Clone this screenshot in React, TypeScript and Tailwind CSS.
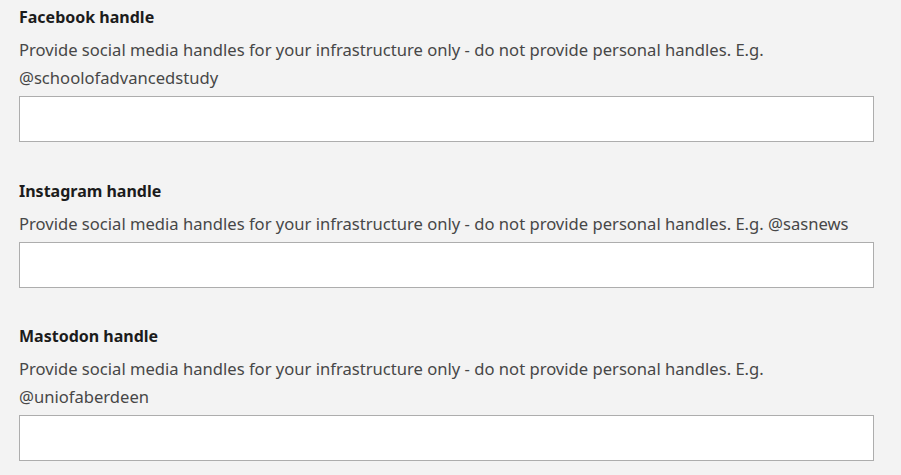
import React from 'react'

const fields = [
  { label: 'Facebook handle', example: '@schoolofadvancedstudy' },
  { label: 'Instagram handle', example: '@sasnews' },
  { label: 'Mastodon handle', example: '@uniofaberdeen' },
]

export default function App() {
  return (
    <div
      className="min-h-[475px] bg-[#f3f3f3] px-[19px] pt-[5px]"
      style={{ fontFamily: '"Noto Sans", sans-serif' }}
    >
      <div className="w-[855px] flex flex-col gap-[36.5px]">
        {fields.map((f) => (
          <div key={f.label} className="flex flex-col">
            <label className="text-[16px] leading-[24px] font-bold text-[#1c1c1c]">{f.label}</label>
            <p className="mt-[7px] text-[16.6px] leading-[28px] text-[#474747]">
              Provide social media handles for your infrastructure only - do not provide personal handles. E.g. {f.example}
            </p>
            <input
              type="text"
              className="mt-[4px] h-[46px] w-full border border-[#adadad] bg-white px-2"
            />
          </div>
        ))}
      </div>
    </div>
  )
}
